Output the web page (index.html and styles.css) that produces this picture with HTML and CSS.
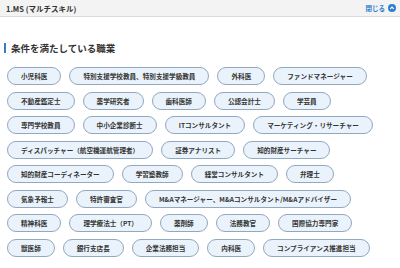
FILE: index.html
```html
<!DOCTYPE html>
<html>
<head>
    <meta charset="utf-8">
    <title>1.MS (マルチスキル)</title>
    <link rel="stylesheet" href="styles.css">
</head>
<body>
    <div class="panel-header">
        <span class="panel-title">1.MS (マルチスキル)</span>
        <a class="close-link" href="#">閉じる
            <svg class="close-icon" viewBox="0 0 10 10" width="8" height="8">
                <circle cx="5" cy="5" r="5" fill="#2f7fd0"/>
                <path d="M2.8 6 L5 3.8 L7.2 6" fill="none" stroke="#fff" stroke-width="1.5"/>
            </svg>
        </a>
    </div>

    <div class="panel-body">
        <h2 class="section-title">条件を満たしている職業</h2>

        <div class="job-list">
            <span class="job-chip">小児科医</span>
            <span class="job-chip">特別支援学校教員、特別支援学級教員</span>
            <span class="job-chip">外科医</span>
            <span class="job-chip">ファンドマネージャー</span>
            <span class="job-chip">不動産鑑定士</span>
            <span class="job-chip">薬学研究者</span>
            <span class="job-chip">歯科医師</span>
            <span class="job-chip">公認会計士</span>
            <span class="job-chip">学芸員</span>
            <span class="job-chip">専門学校教員</span>
            <span class="job-chip">中小企業診断士</span>
            <span class="job-chip">ITコンサルタント</span>
            <span class="job-chip">マーケティング・リサーチャー</span>
            <span class="job-chip">ディスパッチャー（航空機運航管理者）</span>
            <span class="job-chip">証券アナリスト</span>
            <span class="job-chip">知的財産サーチャー</span>
            <span class="job-chip">知的財産コーディネーター</span>
            <span class="job-chip">学習塾教師</span>
            <span class="job-chip">経営コンサルタント</span>
            <span class="job-chip">弁理士</span>
            <span class="job-chip">気象予報士</span>
            <span class="job-chip">特許審査官</span>
            <span class="job-chip">M&amp;Aマネージャー、M&amp;Aコンサルタント/M&amp;Aアドバイザー</span>
            <span class="job-chip">精神科医</span>
            <span class="job-chip">理学療法士（PT）</span>
            <span class="job-chip">薬剤師</span>
            <span class="job-chip">法務教官</span>
            <span class="job-chip">国際協力専門家</span>
            <span class="job-chip">獣医師</span>
            <span class="job-chip">銀行支店長</span>
            <span class="job-chip">企業法務担当</span>
            <span class="job-chip">内科医</span>
            <span class="job-chip">コンプライアンス推進担当</span>
        </div>
    </div>
</body>
</html>
```

FILE: styles.css
```css
* {
    margin: 0;
    padding: 0;
    box-sizing: border-box;
}

body {
    font-family: "Noto Sans CJK JP", "Noto Sans", sans-serif;
    background: white;
    color: #333;
}

.panel-header {
    height: 17px;
    background: #f3f3f3;
    border-bottom: 1px solid #dcdcdc;
    display: flex;
    align-items: center;
    justify-content: space-between;
    padding: 0 4px 0 6px;
}

.panel-title {
    font-size: 7.5px;
    font-weight: bold;
    color: #333;
}

.close-link {
    display: flex;
    align-items: center;
    gap: 3px;
    font-size: 6.5px;
    font-weight: bold;
    color: #2f7fd0;
    text-decoration: none;
}

.close-icon {
    display: block;
}

.panel-body {
    padding: 26px 6px 0 7px;
}

.section-title {
    font-size: 9.5px;
    font-weight: bold;
    color: #333;
    line-height: 10px;
    border-left: 2px solid #3a7cc0;
    padding-left: 5px;
    margin-left: -3px;
    margin-bottom: 14px;
}

.job-list {
    display: flex;
    flex-wrap: wrap;
    gap: 6.5px 8px;
}

.job-chip {
    height: 18px;
    padding: 0 13px;
    border: 1px solid #93a8bd;
    border-radius: 9px;
    background: #eaf3fc;
    font-size: 6.6px;
    font-weight: bold;
    color: #333;
    display: flex;
    align-items: center;
    justify-content: center;
    min-width: 47px;
    white-space: nowrap;
}
```
